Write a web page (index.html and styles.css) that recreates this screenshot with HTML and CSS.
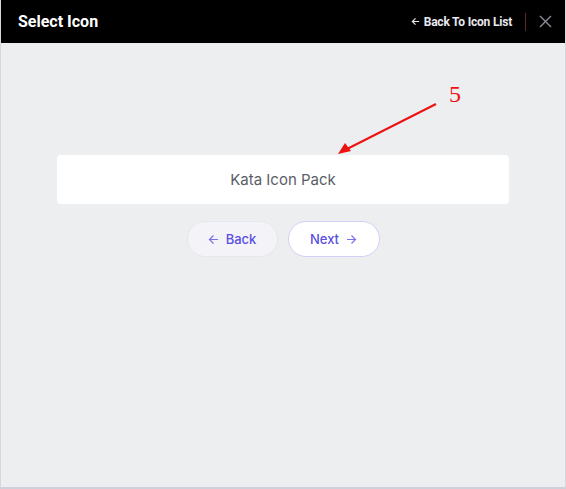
FILE: index.html
```html
<!DOCTYPE html>
<html>
<head>
<meta charset="utf-8">
<link rel="stylesheet" href="styles.css">
</head>
<body>
<div class="modal">
  <header class="head">
    <h1 class="title">Select Icon</h1>
    <div class="head-actions">
      <a class="back-link"><svg width="9" height="9" viewBox="0 0 10 10"><path d="M9 5H1.5M5 1.5L1.5 5 5 8.5" fill="none" stroke="#e8e8ee" stroke-width="1.3"/></svg>Back To Icon List</a>
      <span class="divider"></span>
      <button class="close"><svg width="13" height="13" viewBox="0 0 13 13"><path d="M1 1L12 12M12 1L1 12" stroke="#8a8f9a" stroke-width="1.4"/></svg></button>
    </div>
  </header>
  <main class="body">
    <div class="card">Kata Icon Pack</div>
    <div class="nav">
      <button class="btn btn-back"><svg width="11" height="11" viewBox="0 0 11 11"><path d="M10 5.5H1.5M5.5 1.5L1.5 5.5 5.5 9.5" fill="none" stroke="#7a70ea" stroke-width="1.2"/></svg>Back</button>
      <button class="btn btn-next">Next<svg width="11" height="11" viewBox="0 0 11 11"><path d="M1 5.5H9.5M5.5 1.5L9.5 5.5 5.5 9.5" fill="none" stroke="#7a70ea" stroke-width="1.2"/></svg></button>
    </div>
  </main>
  <div class="annot">
    <span class="annot-num">5</span>
    <svg class="annot-arrow" width="120" height="70" viewBox="0 0 120 70"><path d="M101 16L12 61" stroke="#ee1111" stroke-width="2"/><path d="M3 66L10 55 16 63Z" fill="#ee1111"/></svg>
  </div>
</div>
</body>
</html>
```
FILE: styles.css
```css
* { box-sizing: border-box; }
html, body { margin: 0; padding: 0; }
body { width: 566px; height: 489px; background: #edeef0; font-family: Inter, Roboto, sans-serif; }
.modal { position: relative; width: 566px; height: 489px; border-left: 1px solid #d6d8de; border-right: 1px solid #d6d8de; border-bottom: 2px solid #cdd1d9; background: #edeef0; display: flex; flex-direction: column; }
.head { height: 43px; background: #000; display: flex; align-items: center; justify-content: space-between; padding: 0 13px 0 17px; flex: none; }
.title { margin: 0; font-family: Roboto, sans-serif; font-weight: 700; font-size: 16px; color: #fff; letter-spacing: 0; }
.head-actions { display: flex; align-items: center; }
.back-link { font-family: Roboto, sans-serif; font-weight: 700; font-size: 12px; color: #e8e8ee; display: flex; align-items: center; gap: 4px; letter-spacing: -0.2px; }
.divider { width: 1px; height: 18px; background: #5c2a28; margin: 0 12px 0 13px; }
.close { border: 0; background: none; padding: 0; display: flex; width: 14px; height: 14px; align-items: center; justify-content: center; }
.body { flex: 1; display: flex; flex-direction: column; align-items: center; padding-top: 112px; }
.card { width: 452px; height: 49px; background: #fff; border-radius: 4px; display: flex; align-items: center; justify-content: center; font-size: 15px; color: #5b5e66; }
.nav { display: flex; gap: 10px; margin-top: 17px; }
.btn { width: 92px; height: 36px; border-radius: 18px; font-family: Inter, sans-serif; font-weight: 500; font-size: 13px; color: #5a4fe0; display: flex; align-items: center; justify-content: center; gap: 7px; padding: 0; }
.btn-back { width: 91px; background: #f4f4f8; border: 1px solid #e6e6ee; }
.btn-next { background: #fff; border: 1px solid #d3cff7; }
.annot { position: absolute; left: 0; top: 0; }
.annot-num { position: absolute; left: 448px; top: 81px; font-family: "Liberation Serif", serif; font-size: 24px; color: #ee1111; }
.annot-arrow { position: absolute; left: 334px; top: 88px; }
```
